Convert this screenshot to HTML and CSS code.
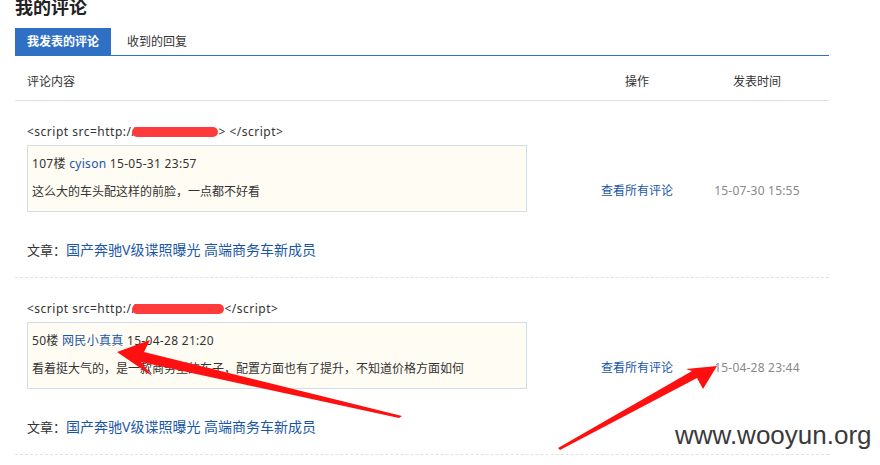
FILE: index.html
```html
<!DOCTYPE html>
<html>
  <head>
    <meta charset="utf-8" />
    <title>我的评论</title>
    <link rel="stylesheet" href="styles.css">
  </head>
  <body>
    <div class="page">
      <h1>我的评论</h1>
      <div class="tabs">
        <a class="tab active">我发表的评论</a>
        <a class="tab">收到的回复</a>
      </div>
      <div class="list">
        <div class="row head">
          <div class="col-content">评论内容</div>
          <div class="col-op">操作</div>
          <div class="col-time">发表时间</div>
        </div>

        <div class="row item">
          <div class="col-content">
            <div class="mine">&lt;script src=http://<span class="redact r1"></span>&gt; &lt;/script&gt;</div>
            <div class="quote">
              <div class="meta">107楼 <a class="user">cyison</a> 15-05-31 23:57</div>
              <div>这么大的车头配这样的前脸，一点都不好看</div>
            </div>
            <div class="article">文章：<a>国产奔驰V级谍照曝光 高端商务车新成员</a></div>
          </div>
          <div class="col-op"><a>查看所有评论</a></div>
          <div class="col-time">15-07-30 15:55</div>
        </div>

        <div class="row item">
          <div class="col-content">
            <div class="mine">&lt;script src=http://<span class="redact r2"></span>&lt;/script&gt;</div>
            <div class="quote">
              <div class="meta">50楼 <a class="user">网民小真真</a> 15-04-28 21:20</div>
              <div>看着挺大气的，是一款商务型的车子，配置方面也有了提升，不知道价格方面如何</div>
            </div>
            <div class="article">文章：<a>国产奔驰V级谍照曝光 高端商务车新成员</a></div>
          </div>
          <div class="col-op"><a>查看所有评论</a></div>
          <div class="col-time">15-04-28 23:44</div>
        </div>
      </div>
    </div>

    <svg class="marks" width="880" height="465" viewBox="0 0 880 465">
      <polygon fill="#ff1010" points="117,352 150,340 144,352 402,416 399,418 141,362 152,376"/>
      <polygon fill="#ff1010" points="717,366 703,389 697,378 560,450 558,448 692,371 686,369"/>
    </svg>
    <div class="watermark">www.wooyun.org</div>
  </body>
</html>
```

FILE: styles.css
```css
body {
  margin: 0;
  font-family: "Noto Sans", "Noto Sans CJK SC", sans-serif;
  font-size: 12px;
  color: #333;
  background: #fff;
}
a {
  color: #1a56a6;
  text-decoration: none;
  cursor: pointer;
}
.page {
  width: 814px;
  padding-left: 15px;
}
h1 {
  margin: -4px 0 10px;
  font-size: 18px;
  line-height: 22px;
  font-weight: bold;
  color: #222;
}
.tabs {
  display: flex;
  height: 27px;
  border-bottom: 1px solid #3070c4;
}
.tab {
  display: block;
  padding: 0 12px;
  line-height: 27px;
  color: #333;
  margin-right: 4px;
}
.tab.active {
  background: #3070c4;
  color: #fff;
  font-weight: bold;
  padding: 0 12px;
}
.row {
  display: grid;
  grid-template-columns: 547px 150px 90px 1fr;
  align-items: center;
}
.row .col-content {
  padding-left: 12px;
}
.col-op, .col-time {
  text-align: center;
}
.head {
  line-height: 14px;
  padding: 19px 0 11px;
  border-bottom: 1px solid #e0e0e0;
}
.item {
  padding: 21px 0 17px;
  border-bottom: 1px dashed #e2e2e2;
  line-height: 20px;
}
.item .col-time {
  color: #888;
  letter-spacing: 0.2px;
}
.mine {
  white-space: nowrap;
  letter-spacing: 0.5px;
}
.meta {
  letter-spacing: 0.3px;
}
.redact {
  display: inline-block;
  height: 10px;
  background: #ff3b3b;
  border-radius: 5px;
  vertical-align: -1px;
  margin-left: -4px;
}
.r1 { width: 86px; }
.r2 { width: 92px; }
.quote {
  margin-top: 3px;
  width: 490px;
  padding: 8px 4px 9px;
  background: #fffcf4;
  border: 1px solid #d3dde8;
  display: flex;
  flex-direction: column;
  gap: 8px;
}
.article {
  margin-top: 28px;
  font-size: 13px;
}
.article a {
  font-size: 14px;
}
.marks {
  position: absolute;
  left: 0;
  top: 0;
  pointer-events: none;
}
.watermark {
  position: absolute;
  left: 675px;
  top: 420px;
  font-family: "Liberation Sans", Arial, sans-serif;
  font-size: 26px;
  color: #3a3a3a;
}
```
